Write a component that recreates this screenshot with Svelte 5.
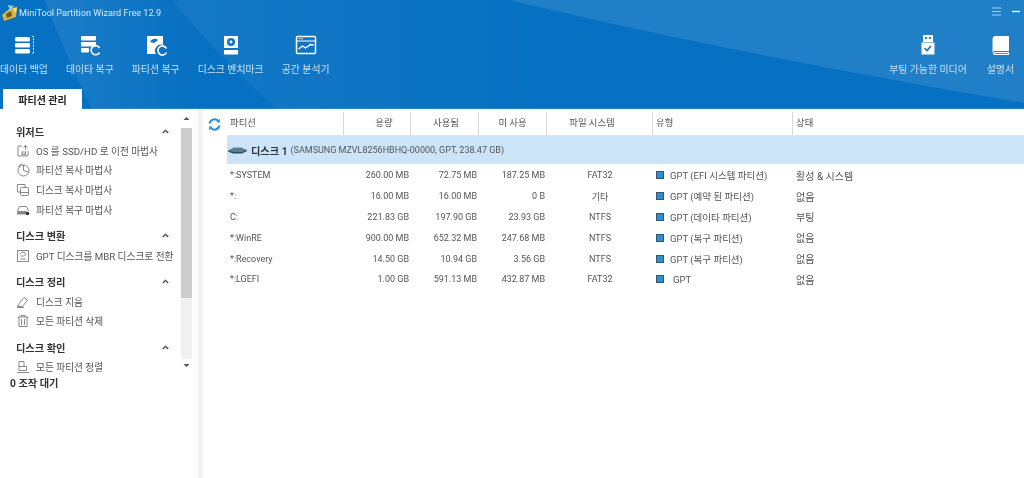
<script lang="ts">
  const tools = [
    { id: "backup", label: "데이타 백업" },
    { id: "recover", label: "데이타 복구" },
    { id: "partrec", label: "파티션 복구" },
    { id: "bench", label: "디스크 벤치마크" },
    { id: "space", label: "공간 분석기" },
  ];
  const groups = [
    { title: "위저드", items: [["os", "OS 를 SSD/HD 로 이전 마법사"], ["pcopy", "파티션 복사 마법사"], ["dcopy", "디스크 복사 마법사"], ["prec", "파티션 복구 마법사"]] },
    { title: "디스크 변환", items: [["conv", "GPT 디스크를 MBR 디스크로 전환"]] },
    { title: "디스크 정리", items: [["wipe", "디스크 지움"], ["trash", "모든 파티션 삭제"]] },
    { title: "디스크 확인", items: [["align", "모든 파티션 정렬"]] },
  ];
  const rows = [
    ["*:SYSTEM", "260.00 MB", "72.75 MB", "187.25 MB", "FAT32", "GPT (EFI 시스템 파티션)", "활성 & 시스템"],
    ["*:", "16.00 MB", "16.00 MB", "0 B", "기타", "GPT (예약 된 파티션)", "없음"],
    ["C:", "221.83 GB", "197.90 GB", "23.93 GB", "NTFS", "GPT (데이타 파티션)", "부팅"],
    ["*:WinRE", "900.00 MB", "652.32 MB", "247.68 MB", "NTFS", "GPT (복구 파티션)", "없음"],
    ["*:Recovery", "14.50 GB", "10.94 GB", "3.56 GB", "NTFS", "GPT (복구 파티션)", "없음"],
    ["*:LGEFI", "1.00 GB", "591.13 MB", "432.87 MB", "FAT32", " GPT", "없음"],
  ];
</script>

<div class="app">
  <header class="head">
    <!-- decorative swooshes behind the ribbon -->
    <svg class="swoosh" width="1024" height="109" viewBox="0 0 1024 109">
      <defs>
        <linearGradient id="bandA" x1="45" x2="200" y1="0" y2="0" gradientUnits="userSpaceOnUse">
          <stop offset="0" stop-color="#fff" stop-opacity=".09" />
          <stop offset="1" stop-color="#fff" stop-opacity="0" />
        </linearGradient>
        <linearGradient id="bandB" x1="172" x2="560" y1="0" y2="0" gradientUnits="userSpaceOnUse">
          <stop offset="0" stop-color="#fff" stop-opacity=".06" />
          <stop offset="1" stop-color="#fff" stop-opacity="0" />
        </linearGradient>
      </defs>
      <path d="M45 0C60 40 75 75 92 109H276C235 70 200 35 172 0Z" fill="url(#bandA)" />
      <path d="M172 0C200 35 235 70 276 109H640L520 0Z" fill="url(#bandB)" />
      <path d="M510 0C640 32 830 70 1024 103V0Z" fill="#fff" fill-opacity=".11" />
    </svg>
    <div class="titlebar">
      <svg class="logo" width="18" height="18" viewBox="0 0 18 18">
        <path d="M1 11 L8 5 L16 3 L15 13 L3 17 Z" fill="#dcb33c" />
        <path d="M7 1 L13 2 L9 7 Z" fill="#9fc9dc" />
        <path d="M5 10 L10 7 L11 12 L6 14 Z" fill="#6b5a22" />
        <path d="M12 5 L16 3 L15 9 Z" fill="#f4e08a" />
      </svg>
      <span class="apptitle">MiniTool Partition Wizard Free 12.9</span>
      <span class="winbtns">
        <svg width="9" height="9" viewBox="0 0 9 9"><path d="M0 1h9M0 4.5h9M0 8h9" stroke="#a8cfee" stroke-width="1" /></svg>
        <svg width="8" height="9" viewBox="0 0 8 9"><path d="M0 4.5h8" stroke="#fff" stroke-width="1.4" /></svg>
      </span>
    </div>
    <div class="toolbar">
      <div class="tools">
        {#each tools as t}
          <div class="tool">
            <svg width="24" height="24" viewBox="0 0 24 24" fill="#fff">
              {#if t.id === "backup"}
                <rect x="3" y="4" width="15" height="4.5" rx="1.5" />
                <rect x="3" y="10" width="15" height="4.5" rx="1" />
                <rect x="3" y="16" width="15" height="4.5" rx="1.5" />
                <path d="M20 3.5h1.5v17H20" fill="none" stroke="#fff" stroke-width="1" stroke-dasharray="2 1.2" />
              {:else if t.id === "recover"}
                <rect x="3" y="3" width="15" height="4.5" rx="1" />
                <rect x="3" y="9" width="15" height="4.5" />
                <rect x="3" y="15" width="8" height="4.5" rx="1" />
                <path d="M21.5 15a4.5 4.5 0 1 0 0 4.5" fill="none" stroke="#fff" stroke-width="1.6" />
              {:else if t.id === "partrec"}
                <path d="M3 3h16v9a6 6 0 0 0-7 9H3z" />
                <path d="M6 9a5 5 0 0 1 8-2l-4 3z" fill="#1273c2" />
                <path d="M22.5 15.5a4.5 4.5 0 1 0 0 4" fill="none" stroke="#fff" stroke-width="1.6" />
              {:else if t.id === "bench"}
                <path d="M5 3h14v12H5z" />
                <rect x="5" y="17" width="14" height="4.5" />
                <circle cx="12" cy="9" r="4" fill="#1273c2" />
                <circle cx="12" cy="9" r="1.4" />
              {:else}
                <rect x="2.5" y="3.5" width="19" height="17" rx="1" fill="none" stroke="#fff" stroke-width="1.5" />
                <path d="M2.5 8h19" stroke="#fff" stroke-width="1" />
                <path d="M5 5.7h1.4M7.6 5.7H9" stroke="#fff" stroke-width="1.2" />
                <path d="M4.5 16l4-3 3 2 5-3.5 3 .5" fill="none" stroke="#fff" stroke-width="1.4" />
              {/if}
            </svg>
            <span>{t.label}</span>
          </div>
        {/each}
      </div>
      <div class="tools right">
        <div class="tool">
          <svg width="24" height="24" viewBox="0 0 24 24" fill="#fff">
            <path d="M7 2h10v7H7z M9 4v2h2V4z M13 4v2h2V4z" fill-rule="evenodd" />
            <rect x="5.5" y="9.5" width="13" height="12" />
            <path d="M8.5 15l2.5 2.5 4-4.5" fill="none" stroke="#1273c2" stroke-width="1.6" />
          </svg>
          <span>부팅 가능한 미디어</span>
        </div>
        <div class="tool">
          <svg width="24" height="24" viewBox="0 0 24 24" fill="#fff">
            <path d="M7 3h14v15H7a2.5 2.5 0 0 0-2.5 2V6A3 3 0 0 1 7 3z" />
            <path d="M5 20.5a2 2 0 0 1 2-1.5h14v3H7a2 2 0 0 1-2-1.5z" />
            <path d="M7 20.5h13" stroke="#1273c2" stroke-width=".8" />
          </svg>
          <span>설명서</span>
        </div>
      </div>
    </div>
    <div class="tabs"><div class="tab">파티션 관리</div></div>
  </header>

  <div class="body">
    <aside class="side">
      <div class="sidewrap">
        <div class="sidelist">
          {#each groups as g}
            <div class="gtitle">
              <b>{g.title}</b>
              <svg width="7" height="5" viewBox="0 0 7 5"><path d="M.8 4L3.5 1.3 6.2 4" fill="none" stroke="#444" stroke-width="1.2" /></svg>
            </div>
            {#each g.items as it}
              <div class="item">
                <svg width="14" height="14" viewBox="0 0 14 14" fill="none" stroke="#888" stroke-width="1">
                  {#if it[0] === "os"}
                    <path d="M6 2H2v10h10V7" /><path d="M9.5 1.5v4M7.5 3.5l2-2 2 2" /><rect x="6" y="8" width="3.5" height="2.5" />
                  {:else if it[0] === "pcopy"}
                    <circle cx="7.5" cy="7.5" r="5.5" /><path d="M7.5 7.5V2M7.5 7.5L12.5 9" /><path d="M2.5 4A4 4 0 0 1 6 1" />
                  {:else if it[0] === "dcopy"}
                    <path d="M9 4V1.5H1.5V9H4" /><rect x="4.5" y="4.5" width="8" height="8" rx="1" /><path d="M4.5 9.5h8" />
                  {:else if it[0] === "prec"}
                    <path d="M1.5 8l2-4.5h7l2 4.5" /><rect x="1" y="8" width="10" height="3.5" rx="1" fill="#888" stroke="none" /><circle cx="11.5" cy="10.5" r="1.8" fill="#333" stroke="none" />
                  {:else if it[0] === "conv"}
                    <rect x="1.5" y="1.5" width="11" height="11" /><path d="M4.5 5a2.5 2 0 0 1 5 0c0 1.5-2 2-2 2h-3M4.5 10h5" />
                  {:else if it[0] === "wipe"}
                    <path d="M1.5 11.5L5 6l3-3.5 3.5 2.5-5 6.5z" /><path d="M1 12.5h7" />
                  {:else if it[0] === "trash"}
                    <path d="M1.5 3h11M5 3V1.5h4V3M3 3v9.5h8V3M5.5 5v6M8.5 5v6" />
                  {:else}
                    <path d="M3 1.5h5v5H3zM3 6.5h7.5v4H3zM1 12.5h12" />
                  {/if}
                </svg>
                <span>{it[1]}</span>
              </div>
            {/each}
          {/each}
        </div>
        <div class="scroll">
          <svg class="arrow up" width="7" height="5" viewBox="0 0 7 5"><path d="M3.5 1L6.5 4H.5z" fill="#555" /></svg>
          <div class="track"><div class="thumb"></div></div>
          <svg class="arrow down" width="7" height="5" viewBox="0 0 7 5"><path d="M3.5 4L6.5 1H.5z" fill="#555" /></svg>
        </div>
      </div>
      <div class="pending"><b>0 조작 대기</b></div>
    </aside>
    <div class="gutter"></div>
    <main class="main">
      <div class="thead">
        <div class="refresh">
          <svg width="13" height="13" viewBox="0 0 13 13" fill="none" stroke="#2a8fdc" stroke-width="2">
            <path d="M1.6 5.5A5 5 0 0 1 10.5 3.3" /><path d="M11.4 7.5A5 5 0 0 1 2.5 9.7" />
            <path d="M11.8 .8v3.6H8.4z" fill="#2a8fdc" stroke="none" /><path d="M1.2 12.2V8.6h3.4z" fill="#2a8fdc" stroke="none" />
          </svg>
        </div>
        <div class="grid hdr">
          <div class="cell l">파티션</div>
          <div class="cell c cap">용량</div>
          <div class="cell c used">사용됨</div>
          <div class="cell c">미 사용</div>
          <div class="cell c fs">파일 시스템</div>
          <div class="cell l">유형</div>
          <div class="cell l last">상태</div>
        </div>
      </div>
      <div class="disk">
        <svg width="19" height="8" viewBox="0 0 19 8"><path d="M0 4.5L6 1.5h7l6 2.5-5 3H5z" fill="#5a7d97" /><path d="M0 4.5l5 1.5h9l5-2v1l-5 2.5H5L0 5.5z" fill="#2f4a60" /></svg>
        <b>디스크 1</b>
        <span>(SAMSUNG MZVL8256HBHQ-00000, GPT, 238.47 GB)</span>
      </div>
      <div class="rows">
        {#each rows as r}
          <div class="grid row">
            <div class="cell l name">{r[0]}</div>
            <div class="cell r">{r[1]}</div>
            <div class="cell r">{r[2]}</div>
            <div class="cell r">{r[3]}</div>
            <div class="cell c">{r[4]}</div>
            <div class="cell l type"><i class="sq"></i><span class:pad={r[5].startsWith(" ")}>{r[5].trim()}</span></div>
            <div class="cell l last">{r[6]}</div>
          </div>
        {/each}
      </div>
    </main>
  </div>
</div>

<style>
  :global(body) {
    margin: 0;
    background: #fff;
  }
  .app {
    width: 1024px;
    height: 478px;
    overflow: hidden;
    display: flex;
    flex-direction: column;
    font-family: Roboto, "Noto Sans CJK KR", sans-serif;
    font-size: 9.5px;
    color: #555;
    background: #fff;
    filter: blur(0.4px);
  }

  .head {
    position: relative;
    height: 109px;
    flex-shrink: 0;
    display: flex;
    flex-direction: column;
    color: #fff;
    background: #0670c2;
    border-bottom: 1px solid #1a84d8;
    box-sizing: border-box;
  }
  .swoosh {
    position: absolute;
    left: 0;
    top: 0;
  }
  .titlebar, .toolbar, .tabs { position: relative; }
  .titlebar {
    height: 25px;
    display: flex;
    align-items: center;
    padding: 0 0 0 1px;
  }
  .logo { margin-right: 0; }
  .apptitle {
    font-size: 9.15px;
    color: #d8e9f7;
  }
  .winbtns {
    margin-left: auto;
    display: flex;
    gap: 11px;
    align-items: center;
    padding-right: 4px;
    margin-top: -2px;
  }

  .toolbar {
    height: 63px;
    display: flex;
    justify-content: space-between;
  }
  .tools {
    display: flex;
    gap: 18px;
  }
  .tools.right {
    gap: 20px;
    padding-right: 10px;
  }
  .tool {
    display: flex;
    flex-direction: column;
    align-items: center;
    padding-top: 8px;
    gap: 5px;
    color: #c9e0f3;
    white-space: nowrap;
    font-size: 9.9px;
  }

  .tabs {
    flex: 1;
    display: flex;
    align-items: flex-end;
    padding-left: 3px;
  }
  .tab {
    width: 79px;
    height: 20px;
    background: #fff;
    color: #222;
    font-weight: 700;
    font-size: 10px;
    display: flex;
    align-items: center;
    justify-content: center;
    margin-bottom: -1px;
  }

  .body {
    flex: 1;
    display: flex;
    min-height: 0;
  }
  .side {
    width: 198px;
    flex-shrink: 0;
    display: flex;
    flex-direction: column;
  }
  .sidewrap {
    width: 192px;
    height: 264px;
    display: flex;
    overflow: hidden;
  }
  .sidelist {
    width: 181px;
    padding-top: 15px;
    box-sizing: border-box;
  }
  .gtitle {
    height: 14px;
    display: flex;
    align-items: center;
    justify-content: space-between;
    padding: 0 12px 0 16px;
    color: #333;
    font-size: 10.2px;
  }
  .gtitle:not(:first-child) { margin-top: 9.5px; }
  .item {
    height: 19.6px;
    display: flex;
    align-items: center;
    gap: 6px;
    padding-left: 16px;
    white-space: nowrap;
    font-size: 9.7px;
  }
  .gtitle + .item { margin-top: 3px; }
  .scroll {
    width: 11px;
    display: flex;
    flex-direction: column;
    align-items: center;
  }
  .arrow { flex-shrink: 0; }
  .arrow.up { margin: 7px 0; }
  .arrow.down { margin: 4px 0 5.5px; }
  .track {
    flex: 1;
    width: 100%;
    background: #f0f0f0;
  }
  .thumb {
    height: 170px;
    background: #cdcdcd;
  }
  .pending {
    padding: 2px 0 0 10px;
    color: #333;
    font-size: 10.2px;
  }

  .gutter {
    width: 5px;
    background: #f3f3f3;
  }

  .main {
    flex: 1;
    min-width: 0;
    padding-top: 3px;
  }
  .thead {
    display: flex;
    height: 24px;
  }
  .refresh {
    width: 24px;
    display: flex;
    align-items: center;
    padding-left: 5px;
    box-sizing: border-box;
  }
  .grid {
    display: grid;
    grid-template-columns: 117px 67px 68px 68px 106px 140px 1fr;
    flex: 1;
  }
  .hdr {
    border-bottom: 1px solid #e4e4e4;
  }
  .hdr .cell {
    border-right: 1px solid #d9d9d9;
    line-height: 22px;
    font-size: 9.4px;
  }
  .hdr .last { border-right: 0; }
  .hdr .cap { padding-left: 17px; }
  .hdr .used { padding-left: 6px; }
  .hdr .fs { padding-right: 18px; }
  .cell {
    padding: 0 3px;
    white-space: nowrap;
  }
  .cell.c { text-align: center; }
  .cell.r { text-align: right; padding-right: 2px; font-size: 9px; }
  .row .c { font-size: 9px; }
  .row .name { font-size: 9px; }
  .row .last { font-size: 10px; }

  .disk {
    margin-left: 24px;
    height: 28px;
    background: #cce4f8;
    display: flex;
    align-items: center;
    padding-left: 1px;
    gap: 3px;
    font-size: 9px;
    color: #555;
  }
  .disk b { color: #333; font-size: 10.2px; }
  .disk svg { margin-right: 1px; }

  .rows {
    margin-left: 24px;
    padding-top: 1px;
  }
  .row {
    height: 20.8px;
    align-items: center;
  }
  .type {
    display: flex;
    align-items: center;
    gap: 6px;
  }
  .sq {
    width: 6px;
    height: 6px;
    background: #2e8fd8;
    border: 1px solid #37556e;
    flex-shrink: 0;
  }
  .pad { padding-left: 3px; }
</style>
